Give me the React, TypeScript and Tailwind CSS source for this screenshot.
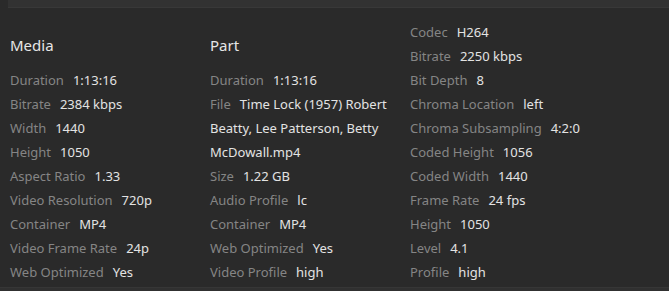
type Row = { label: string; value: string }

const media: Row[] = [
  { label: 'Duration', value: '1:13:16' },
  { label: 'Bitrate', value: '2384 kbps' },
  { label: 'Width', value: '1440' },
  { label: 'Height', value: '1050' },
  { label: 'Aspect Ratio', value: '1.33' },
  { label: 'Video Resolution', value: '720p' },
  { label: 'Container', value: 'MP4' },
  { label: 'Video Frame Rate', value: '24p' },
  { label: 'Web Optimized', value: 'Yes' },
]

const part: Row[] = [
  { label: 'Duration', value: '1:13:16' },
  { label: 'File', value: 'Time Lock (1957) Robert Beatty, Lee Patterson, Betty McDowall.mp4' },
  { label: 'Size', value: '1.22 GB' },
  { label: 'Audio Profile', value: 'lc' },
  { label: 'Container', value: 'MP4' },
  { label: 'Web Optimized', value: 'Yes' },
  { label: 'Video Profile', value: 'high' },
]

const stream: Row[] = [
  { label: 'Codec', value: 'H264' },
  { label: 'Bitrate', value: '2250 kbps' },
  { label: 'Bit Depth', value: '8' },
  { label: 'Chroma Location', value: 'left' },
  { label: 'Chroma Subsampling', value: '4:2:0' },
  { label: 'Coded Height', value: '1056' },
  { label: 'Coded Width', value: '1440' },
  { label: 'Frame Rate', value: '24 fps' },
  { label: 'Height', value: '1050' },
  { label: 'Level', value: '4.1' },
  { label: 'Profile', value: 'high' },
]

function InfoColumn({ title, rows }: { title?: string; rows: Row[] }) {
  return (
    <div className="w-[200px] shrink-0 pl-[10px] pr-[12px]">
      {title && <h3 className="text-[15px] leading-[24px] text-[#e6e6e6] mb-[11px]">{title}</h3>}
      {rows.map((r) => (
        <p key={r.label} className="text-[13px] leading-[24px]">
          <span className="text-[#858585] mr-[9px]">{r.label}</span>
          <span className="text-[#e3e3e3]">{r.value}</span>
        </p>
      ))}
    </div>
  )
}

export default function App() {
  return (
    <div
      className="h-[291px] w-[669px] overflow-hidden bg-[#2a2a2a] flex flex-col"
      style={{ fontFamily: '"Noto Sans", "Open Sans", sans-serif' }}
    >
      <div className="h-2 ml-2 bg-[#323232] border-b border-[#383838]" />
      <div className="flex items-end h-[276px] pb-0">
        <InfoColumn title="Media" rows={media} />
        <InfoColumn title="Part" rows={part} />
        <InfoColumn rows={stream} />
      </div>
      <div className="mt-[3px] flex-1 bg-[#303030] border-t border-[#363636]" />
    </div>
  )
}
